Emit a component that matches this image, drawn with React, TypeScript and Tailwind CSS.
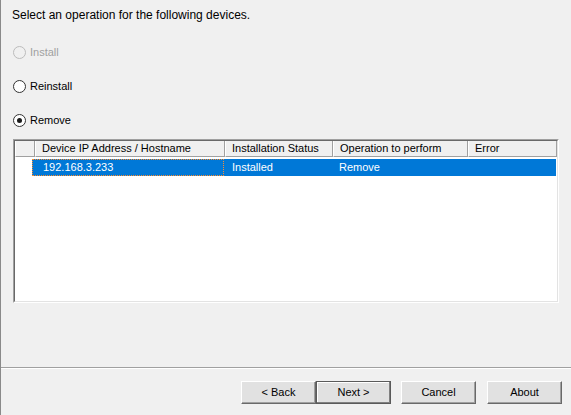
import React from "react";

function Radio({ label, checked, disabled }: { label: string; checked?: boolean; disabled?: boolean }) {
  return (
    <div className="flex items-center h-[16px]">
      <div
        className={
          "w-[13px] h-[13px] rounded-full border flex items-center justify-center " +
          (disabled ? "border-[#bcbcbc] bg-[#f0f0f0]" : "border-[#333333] bg-white")
        }
      >
        {checked && <div className="w-[5px] h-[5px] rounded-full bg-[#1a1a1a]" />}
      </div>
      <span className={"ml-[4px] leading-[15px] " + (disabled ? "text-[#a0a0a0]" : "text-black")}>{label}</span>
    </div>
  );
}

function Btn({ label, def }: { label: string; def?: boolean }) {
  return (
    <div
      className={
        "h-[23px] flex items-center justify-center bg-[#e1e1e1] text-black " +
        (def
          ? "w-[75px] border border-[#5a5a5a] shadow-[inset_-1px_-1px_0_#808080,inset_1px_1px_0_#ffffff]"
          : "w-[75px] border-t border-l border-[#ffffff] border-r border-b border-r-[#696969] border-b-[#696969] shadow-[inset_-1px_-1px_0_#a0a0a0]")
      }
    >
      {label}
    </div>
  );
}

export default function App() {
  const cols = [
    { label: "", w: "w-[20px]" },
    { label: "Device IP Address / Hostname", w: "w-[190px]" },
    { label: "Installation Status", w: "w-[108px]" },
    { label: "Operation to perform", w: "w-[135px]" },
    { label: "Error", w: "w-[89px]" },
  ];
  return (
    <div
      className="w-[571px] h-[415px] bg-[#f0f0f0] border-l border-[#8a8a8a] flex flex-col text-[11px] overflow-hidden"
      style={{ fontFamily: '"Liberation Sans", Arial, sans-serif' }}
    >
      <div className="pl-[11px] pt-[8px] leading-[15px] text-[12px] text-black">Select an operation for the following devices.</div>
      <div className="pl-[12px] mt-[21px]">
        <Radio label="Install" disabled />
      </div>
      <div className="pl-[12px] mt-[18px]">
        <Radio label="Reinstall" />
      </div>
      <div className="pl-[12px] mt-[18px]">
        <Radio label="Remove" checked />
      </div>
      <div className="ml-[12px] mt-[11px] w-[546px] h-[164px] border border-t-[#a0a0a0] border-l-[#a0a0a0] border-r-white border-b-white">
        <div className="w-full h-full border border-t-[#696969] border-l-[#696969] border-r-[#e3e3e3] border-b-[#e3e3e3] bg-white flex flex-col">
          <div className="flex h-[16px] bg-white">
            {cols.map((c, i) => (
              <div
                key={i}
                className={
                  c.w +
                  " h-full bg-[#f0f0f0] border-r border-b border-[#a0a0a0] border-l border-l-white pl-[6px] leading-[15px] text-black whitespace-nowrap overflow-hidden"
                }
              >
                {c.label}
              </div>
            ))}
          </div>
          <div className="flex mt-[2px] ml-[17px] mr-[1px] h-[17px] bg-[#0078d7] text-white leading-[15px]">
            <div className="w-[192px] h-full border border-dotted border-[#ff8c2a] pl-[10px]">192.168.3.233</div>
            <div className="w-[108px] pl-[8px] pt-[1px]">Installed</div>
            <div className="w-[135px] pl-[7px] pt-[1px]">Remove</div>
            <div className="flex-1" />
          </div>
        </div>
      </div>
      <div className="flex-1" />
      <div className="h-[2px] border-t border-[#a0a0a0] border-b border-b-white" />
      <div className="flex mt-[12px] mb-[11px] pr-[9px] justify-end">
        <Btn label="< Back" />
        <Btn label="Next >" def />
        <div className="w-[10px]" />
        <Btn label="Cancel" />
        <div className="w-[11px]" />
        <Btn label="About" />
      </div>
    </div>
  );
}
